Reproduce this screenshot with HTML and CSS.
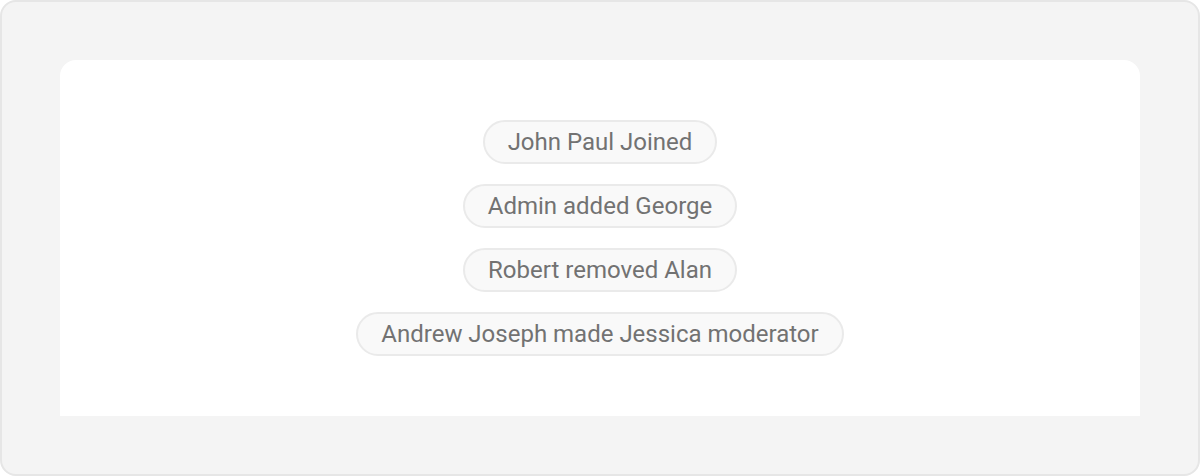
FILE: index.html
```html
<!DOCTYPE html>
<html>
<head>
<meta charset="utf-8">
<link rel="stylesheet" href="styles.css">
</head>
<body>
<div class="frame">
  <div class="panel">
    <div class="event">John Paul Joined</div>
    <div class="event">Admin added George</div>
    <div class="event">Robert removed Alan</div>
    <div class="event">Andrew Joseph made Jessica moderator</div>
  </div>
</div>
</body>
</html>
```
FILE: styles.css
```css
html, body {
  margin: 0;
  padding: 0;
  background: #ffffff;
}
.frame {
  box-sizing: border-box;
  width: 1200px;
  height: 476px;
  background: #f4f4f4;
  border: 2px solid #e6e6e6;
  border-radius: 16px;
  padding: 58px;
}
.panel {
  box-sizing: border-box;
  height: 356px;
  background: #ffffff;
  border-radius: 16px 16px 0 0;
  padding-top: 60px;
  display: flex;
  flex-direction: column;
  align-items: center;
  gap: 20px;
  font-family: Roboto, "Liberation Sans", sans-serif;
}
.event {
  box-sizing: border-box;
  height: 44px;
  padding: 0 23px;
  border: 2px solid #eaeaea;
  background: #f9f9f9;
  border-radius: 22px;
  font-size: 24px;
  font-weight: 400;
  line-height: 40px;
  color: #727272;
  white-space: nowrap;
}
```
